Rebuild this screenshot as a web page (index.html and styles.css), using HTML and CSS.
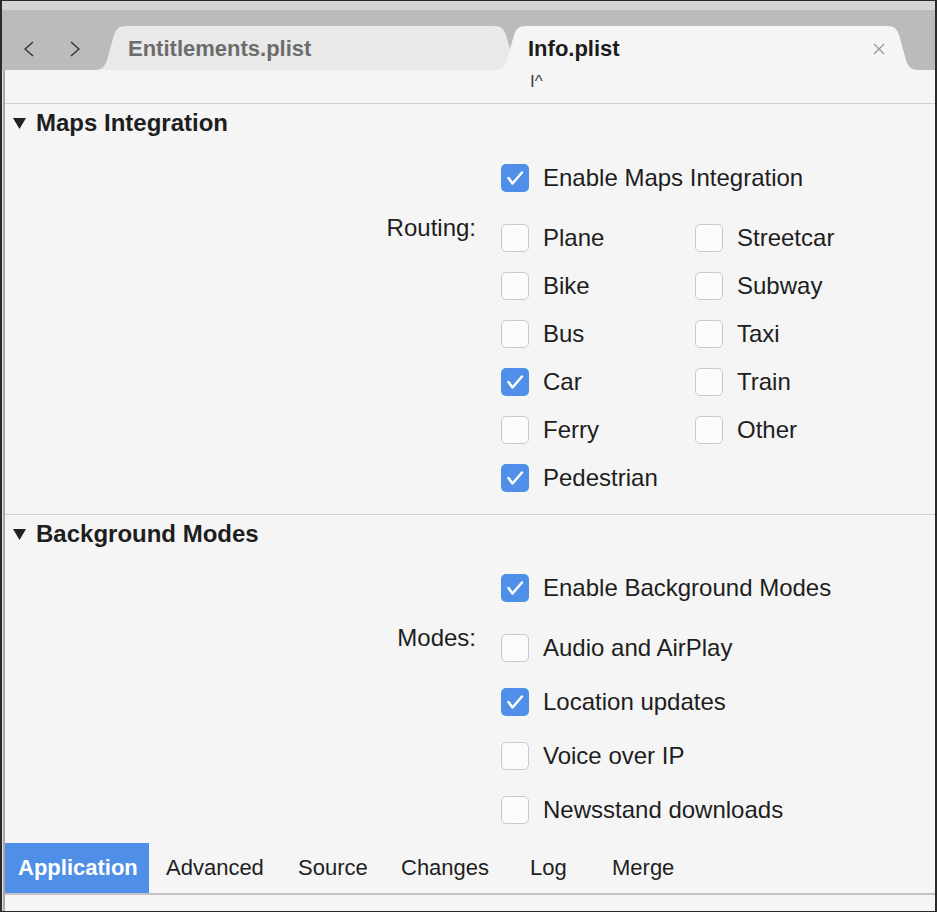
FILE: index.html
```html
<!DOCTYPE html>
<html>
<head>
<meta charset="utf-8">
<link rel="stylesheet" href="styles.css">
</head>
<body>
<div class="window">
  <div class="strip"></div>
  <div class="tabbar">
    <div class="nav">
      <svg class="chev" width="10" height="16" viewBox="0 0 10 16"><polyline points="9,1 1,8 9,15" fill="none" stroke="#333" stroke-width="1.4"/></svg>
      <svg class="chev" width="10" height="16" viewBox="0 0 10 16"><polyline points="1,1 9,8 1,15" fill="none" stroke="#333" stroke-width="1.4"/></svg>
    </div>
    <div class="tab tab-inactive">
      <svg class="tab-shape" width="430" height="44" viewBox="0 0 430 44"><path d="M0 44 C7 44 10 40 12 34 L19 9 C21 3 24 0 31 0 L399 0 C406 0 409 3 411 9 L418 34 C420 40 423 44 430 44 Z" fill="#e9e9e9"/></svg>
      <span class="tab-label">Entitlements.plist</span>
    </div>
    <div class="tab tab-active">
      <svg class="tab-shape" width="423" height="44" viewBox="0 0 423 44"><path d="M0 44 C7 44 10 40 12 34 L19 9 C21 3 24 0 31 0 L392 0 C399 0 402 3 404 9 L411 34 C413 40 416 44 423 44 Z" fill="#f5f5f5"/></svg>
      <span class="tab-label">Info.plist</span>
      <svg class="tab-close" width="12" height="12" viewBox="0 0 12 12"><path d="M1 1 L11 11 M11 1 L1 11" stroke="#9a9a9a" stroke-width="1.3"/></svg>
    </div>
  </div>
  <div class="main">
    <div class="scroll">
      <div class="crumb"><span class="crumb-text">I^</span></div>

      <div class="section">
        <div class="section-head">
          <svg width="13" height="11" viewBox="0 0 13 11"><polygon points="0,0 13,0 6.5,11" fill="#222"/></svg>
          <span>Maps Integration</span>
        </div>
        <div class="form">
          <div class="field-label"></div>
          <div class="option">
            <span class="cb cb-on"><svg width="28" height="28" viewBox="0 0 28 28"><path d="M7.5 14 L11.5 19.5 L21 8.5" fill="none" stroke="#fff" stroke-width="2.5" stroke-linecap="round" stroke-linejoin="round"/></svg></span>
            <span>Enable Maps Integration</span>
          </div>
          <div class="field-label">Routing:</div>
          <div class="options">
            <div class="option"><span class="cb"></span><span>Plane</span></div>
            <div class="option"><span class="cb"></span><span>Streetcar</span></div>
            <div class="option"><span class="cb"></span><span>Bike</span></div>
            <div class="option"><span class="cb"></span><span>Subway</span></div>
            <div class="option"><span class="cb"></span><span>Bus</span></div>
            <div class="option"><span class="cb"></span><span>Taxi</span></div>
            <div class="option"><span class="cb cb-on"><svg width="28" height="28" viewBox="0 0 28 28"><path d="M7.5 14 L11.5 19.5 L21 8.5" fill="none" stroke="#fff" stroke-width="2.5" stroke-linecap="round" stroke-linejoin="round"/></svg></span><span>Car</span></div>
            <div class="option"><span class="cb"></span><span>Train</span></div>
            <div class="option"><span class="cb"></span><span>Ferry</span></div>
            <div class="option"><span class="cb"></span><span>Other</span></div>
            <div class="option"><span class="cb cb-on"><svg width="28" height="28" viewBox="0 0 28 28"><path d="M7.5 14 L11.5 19.5 L21 8.5" fill="none" stroke="#fff" stroke-width="2.5" stroke-linecap="round" stroke-linejoin="round"/></svg></span><span>Pedestrian</span></div>
          </div>
        </div>
      </div>

      <div class="section">
        <div class="section-head">
          <svg width="13" height="11" viewBox="0 0 13 11"><polygon points="0,0 13,0 6.5,11" fill="#222"/></svg>
          <span>Background Modes</span>
        </div>
        <div class="form form-modes">
          <div class="field-label"></div>
          <div class="option">
            <span class="cb cb-on"><svg width="28" height="28" viewBox="0 0 28 28"><path d="M7.5 14 L11.5 19.5 L21 8.5" fill="none" stroke="#fff" stroke-width="2.5" stroke-linecap="round" stroke-linejoin="round"/></svg></span>
            <span>Enable Background Modes</span>
          </div>
          <div class="field-label field-label-modes">Modes:</div>
          <div class="mode-list">
            <div class="option option-tall"><span class="cb"></span><span>Audio and AirPlay</span></div>
            <div class="option option-tall"><span class="cb cb-on"><svg width="28" height="28" viewBox="0 0 28 28"><path d="M7.5 14 L11.5 19.5 L21 8.5" fill="none" stroke="#fff" stroke-width="2.5" stroke-linecap="round" stroke-linejoin="round"/></svg></span><span>Location updates</span></div>
            <div class="option option-tall"><span class="cb"></span><span>Voice over IP</span></div>
            <div class="option option-tall"><span class="cb"></span><span>Newsstand downloads</span></div>
          </div>
        </div>
      </div>
    </div>

    <div class="bottom-tabs">
      <div class="btab btab-active">Application</div>
      <div class="btab">Advanced</div>
      <div class="btab">Source</div>
      <div class="btab">Changes</div>
      <div class="btab">Log</div>
      <div class="btab">Merge</div>
    </div>
    <div class="footer"></div>
  </div>
</div>
</body>
</html>
```

FILE: styles.css
```css
html, body {
  margin: 0;
  padding: 0;
  background: #ffffff;
}

body {
  font-family: "Liberation Sans", Arial, Helvetica, sans-serif;
  color: #202020;
}

.window {
  width: 937px;
  height: 912px;
  box-sizing: border-box;
  border: 1px solid #2a2a2a;
  border-left-width: 2px;
  border-right-width: 2px;
  display: flex;
  flex-direction: column;
  background: #f5f5f5;
  overflow: hidden;
}

.strip {
  height: 9px;
  flex: none;
  background: #d5d4d6;
}

.tabbar {
  height: 60px;
  flex: none;
  background: #babcba;
  display: flex;
  align-items: flex-end;
}

.nav {
  width: 93px;
  height: 60px;
  box-sizing: border-box;
  padding: 17px 0 0 22px;
  display: flex;
  align-items: center;
  gap: 36px;
  flex: none;
}

.chev {
  display: block;
}

.tab {
  position: relative;
  height: 44px;
  box-sizing: border-box;
  padding: 2px 33px 0 33px;
  display: flex;
  align-items: center;
  font-size: 22px;
  font-weight: bold;
  flex: none;
}

.tab-shape {
  position: absolute;
  left: 0;
  top: 0;
}

.tab-label,
.tab-close {
  position: relative;
}

.tab-inactive {
  width: 430px;
  color: #6c6c6c;
}

.tab-active {
  width: 423px;
  margin-left: -30px;
  color: #1c1c1c;
  justify-content: space-between;
}

.main {
  flex: 1;
  display: flex;
  flex-direction: column;
  padding-left: 3px;
  box-shadow: inset 1px 0 #e0e0e0, inset 3px 0 #a9a9a9;
}

.scroll {
  flex: 1;
  overflow: hidden;
}

.crumb {
  height: 33px;
  overflow: hidden;
  padding-left: 525px;
  box-sizing: border-box;
}

.crumb-text {
  display: block;
  font-size: 17px;
  line-height: 20px;
  margin-top: 2px;
  color: #3a3a3a;
}

.section {
  border-top: 1px solid #d2d2d2;
}

.section-head {
  height: 38px;
  display: flex;
  align-items: center;
  gap: 10px;
  padding-left: 8px;
  font-size: 24px;
  font-weight: bold;
  color: #1e1e1e;
}

.section-head svg {
  display: block;
}

.form {
  display: grid;
  grid-template-columns: 471px 1fr;
  column-gap: 25px;
  row-gap: 12px;
  padding: 12px 0 12px 0;
}

.form-modes {
  padding-top: 11px;
  row-gap: 9px;
  padding-bottom: 0;
}

.field-label {
  text-align: right;
  font-size: 24px;
  line-height: 28px;
  color: #1e1e1e;
}

.field-label-modes {
  padding-top: 3px;
}

.options {
  display: grid;
  grid-template-columns: 194px 194px;
}

.mode-list {
  display: flex;
  flex-direction: column;
}

.option {
  height: 48px;
  display: flex;
  align-items: center;
  gap: 14px;
  font-size: 24px;
  color: #1e1e1e;
}

.option-tall {
  height: 54px;
}

.cb {
  width: 28px;
  height: 28px;
  box-sizing: border-box;
  border: 1px solid #c9c9c9;
  border-radius: 5px;
  background: #fbfbfb;
  flex: none;
}

.cb-on {
  border: none;
  background: #4f8fe8;
}

.cb-on svg {
  display: block;
}

.bottom-tabs {
  height: 50px;
  flex: none;
  display: grid;
  grid-template-columns: 144px 132px 103px 129px 82px 1fr;
  border-bottom: 2px solid #c3c3c3;
}

.btab {
  display: flex;
  align-items: center;
  padding-left: 17px;
  font-size: 22px;
  color: #1f1f1f;
}

.btab-active {
  background: #4f8fe8;
  color: #ffffff;
  font-weight: bold;
  padding-left: 13px;
}

.footer {
  height: 16px;
  flex: none;
}
```
